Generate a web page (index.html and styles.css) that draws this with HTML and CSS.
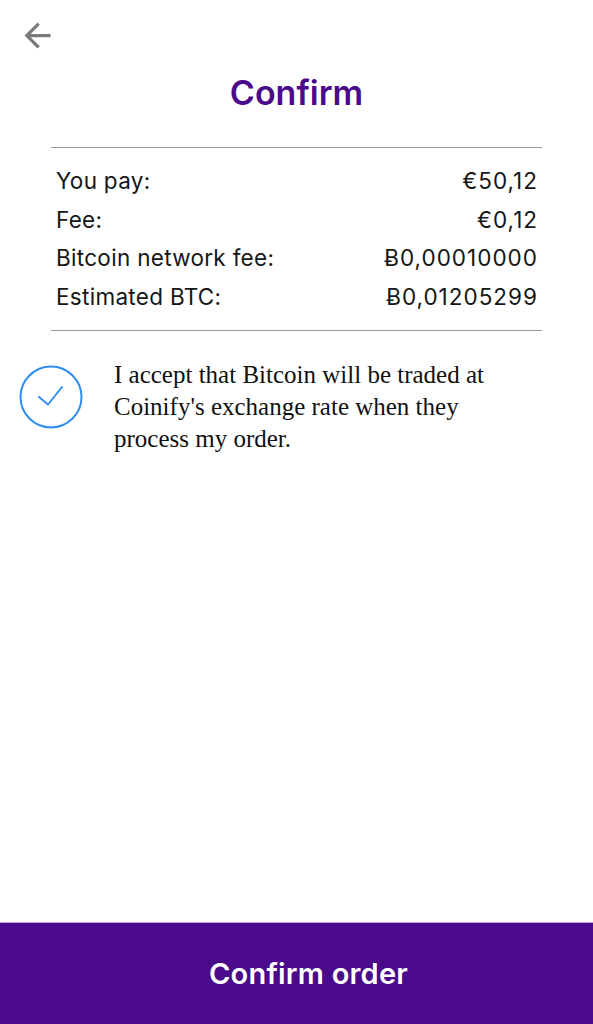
FILE: index.html
```html
<!DOCTYPE html>
<html>
<head>
<meta charset="utf-8">
<link rel="stylesheet" href="styles.css">
</head>
<body>
<div class="page">
  <header class="topbar">
    <button class="back" aria-label="Back">
      <svg viewBox="0 0 24 24" width="39" height="39"><path d="M20 11H7.83l5.59-5.59L12 4l-8 8 8 8 1.41-1.41L7.83 13H20v-2z" fill="#7a7a7a"/></svg>
    </button>
  </header>
  <h1 class="title">Confirm</h1>
  <section class="summary">
    <div class="row"><span>You pay:</span><span class="val">€50,12</span></div>
    <div class="row"><span>Fee:</span><span class="val">€0,12</span></div>
    <div class="row"><span>Bitcoin network fee:</span><span class="val">Ƀ0,00010000</span></div>
    <div class="row"><span>Estimated BTC:</span><span class="val">Ƀ0,01205299</span></div>
  </section>
  <section class="accept">
    <div class="check">
      <svg viewBox="0 0 64 64" width="64" height="64">
        <circle cx="32" cy="32" r="30.5" fill="none" stroke="#2f8ef2" stroke-width="2"/>
        <path d="M20 32 L29 39.5 L43 22" fill="none" stroke="#2f8ef2" stroke-width="2" stroke-linecap="round" stroke-linejoin="round"/>
      </svg>
    </div>
    <p class="accept-text">I accept that Bitcoin will be traded at Coinify's exchange rate when they process my order.</p>
  </section>
  <div class="spacer"></div>
  <button class="confirm">Confirm order</button>
</div>
</body>
</html>
```
FILE: styles.css
```css
html, body {
  margin: 0;
  padding: 0;
  background: #fff;
}
.page {
  width: 593px;
  height: 1024px;
  display: flex;
  flex-direction: column;
  font-family: "Inter", "Lato", sans-serif;
}
.topbar {
  height: 56px;
  padding: 16px 0 0 18px;
  box-sizing: border-box;
}
.back {
  border: 0;
  background: none;
  padding: 0;
  width: 39px;
  height: 39px;
  display: block;
}
.title {
  margin: 15px 0 0;
  text-align: center;
  font-size: 34px;
  font-weight: 600;
  color: #4a0a8b;
  line-height: 44px;
}
.summary {
  margin: 32px 51px 0;
  border-top: 1.5px solid #999;
  border-bottom: 1.5px solid #999;
  padding: 14px 5px 13px;
  display: flex;
  flex-direction: column;
}
.row {
  display: flex;
  justify-content: space-between;
  font-size: 22.5px;
  letter-spacing: 0.3px;
  line-height: 38.7px;
  color: #161616;
}
.val {
  letter-spacing: 1px;
  margin-right: -1px;
}
.accept {
  margin-top: 28px;
  display: flex;
  align-items: flex-start;
  padding-left: 19px;
}
.check {
  width: 64px;
  height: 64px;
  margin-top: 6px;
}
.check svg { display: block; }
.accept-text {
  margin: 0 0 0 31px;
  width: 385px;
  font-family: "Liberation Serif", serif;
  font-size: 25px;
  line-height: 32px;
  color: #111;
}
.spacer { flex: 1; }
.confirm {
  height: 102px;
  border: 0;
  border-top: 1px solid #b8a6d6;
  background: #4a0a8b;
  color: #fff;
  font-family: "Inter", "Lato", sans-serif;
  font-size: 29px;
  font-weight: 600;
  letter-spacing: 0.2px;
  padding: 0 0 0 24px;
  width: 100%;
}
```
